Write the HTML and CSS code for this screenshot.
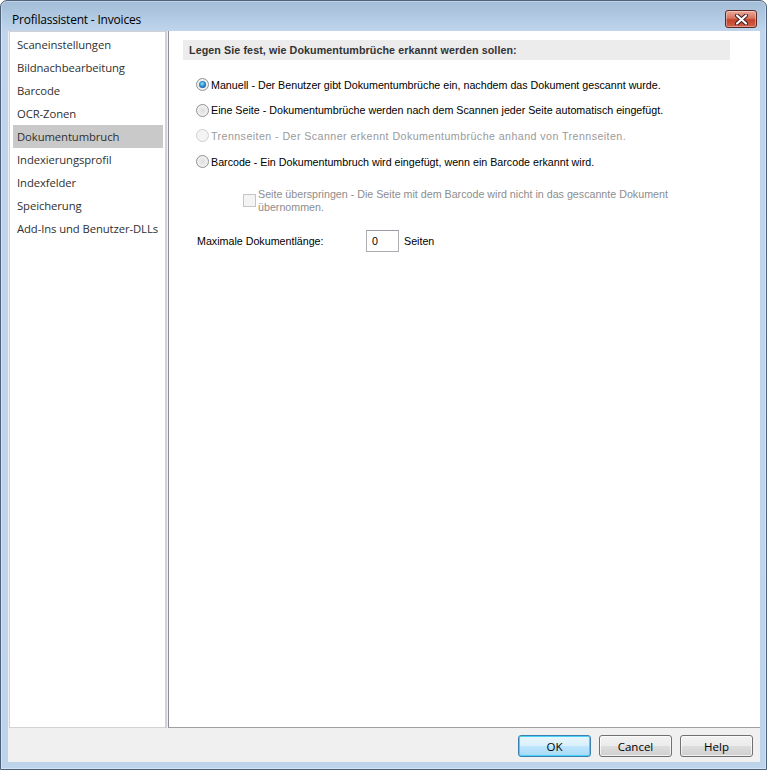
FILE: index.html
```html
<!DOCTYPE html>
<html lang="de">
<head>
<meta charset="utf-8">
<title>Profilassistent - Invoices</title>
<link rel="stylesheet" href="styles.css">
</head>
<body>
<div class="window">
  <div class="titlebar">
    <span class="title">Profilassistent - Invoices</span>
    <span class="close">
      <svg width="15" height="11" viewBox="0 0 15 11">
        <path d="M3 1.5 L12 9.5 M12 1.5 L3 9.5" stroke="#3a1a1a" stroke-width="4" stroke-linecap="round"/>
        <path d="M3 1.5 L12 9.5 M12 1.5 L3 9.5" stroke="#ffffff" stroke-width="2.2" stroke-linecap="round"/>
      </svg>
    </span>
  </div>
  <div class="client">
    <div class="main">
      <div class="nav">
        <div class="nav-item">Scaneinstellungen</div>
        <div class="nav-item">Bildnachbearbeitung</div>
        <div class="nav-item">Barcode</div>
        <div class="nav-item">OCR-Zonen</div>
        <div class="nav-item selected">Dokumentumbruch</div>
        <div class="nav-item">Indexierungsprofil</div>
        <div class="nav-item">Indexfelder</div>
        <div class="nav-item">Speicherung</div>
        <div class="nav-item">Add-Ins und Benutzer-DLLs</div>
      </div>
      <div class="content">
        <div class="header">Legen Sie fest, wie Dokumentumbrüche erkannt werden sollen:</div>
        <div class="options">
          <div class="opt"><span class="radio checked"></span><span>Manuell - Der Benutzer gibt Dokumentumbrüche ein, nachdem das Dokument gescannt wurde.</span></div>
          <div class="opt"><span class="radio"></span><span>Eine Seite - Dokumentumbrüche werden nach dem Scannen jeder Seite automatisch eingefügt.</span></div>
          <div class="opt disabled"><span class="radio"></span><span>Trennseiten - Der Scanner erkennt Dokumentumbrüche anhand von Trennseiten.</span></div>
          <div class="opt"><span class="radio"></span><span>Barcode - Ein Dokumentumbruch wird eingefügt, wenn ein Barcode erkannt wird.</span></div>
        </div>
        <div class="check-row">
          <span class="checkbox"></span>
          <span class="check-text">Seite überspringen - Die Seite mit dem Barcode wird nicht in das gescannte Dokument übernommen.</span>
        </div>
        <div class="len-row">
          <span class="len-label">Maximale Dokumentlänge:</span>
          <span class="input">0</span>
          <span class="unit">Seiten</span>
        </div>
      </div>
    </div>
    <div class="footer">
      <button class="btn default">OK</button>
      <button class="btn">Cancel</button>
      <button class="btn">Help</button>
    </div>
  </div>
</div>
</body>
</html>
```
FILE: styles.css
```css
html, body {
  margin: 0;
  padding: 0;
  background: #ffffff;
}
.window {
  box-sizing: border-box;
  width: 767px;
  height: 770px;
  border: 1px solid #4d6178;
  border-radius: 7px 7px 0 0;
  background: linear-gradient(to bottom, #a3bcd7 0px, #b3cbe4 18px, #c0d5ec 30px, #bed4eb 100%);
  padding: 0 6px 7px 7px;
  display: flex;
  flex-direction: column;
  box-shadow: inset 0 0 0 1px rgba(255,255,255,0.35);
}
.titlebar {
  height: 30px;
  display: flex;
  align-items: center;
  justify-content: space-between;
  flex: none;
}
.title {
  font-family: "Open Sans", "Noto Sans", sans-serif;
  font-size: 12px;
  color: #000;
  margin-left: 4px;
  margin-top: 6px;
  letter-spacing: -0.2px;
}
.close {
  width: 30px;
  height: 16px;
  border: 1px solid #5b2a25;
  border-radius: 3px;
  background: linear-gradient(to bottom, #e9a99b 0%, #d7735f 45%, #c4432c 55%, #d0614a 100%);
  display: flex;
  align-items: center;
  justify-content: center;
  margin-right: 3px;
  margin-top: 6px;
  box-shadow: inset 0 0 0 1px rgba(255,255,255,0.35);
}
.close svg { display: block; }
.client {
  flex: 1;
  background: #f0f0f0;
  display: flex;
  flex-direction: column;
  min-height: 0;
}
.main {
  flex: 1;
  display: flex;
  min-height: 0;
}
.nav {
  box-sizing: border-box;
  width: 158px;
  margin-left: 1px;
  background: #ffffff;
  border: 1px solid #d2d2d2;
  border-right-width: 2px;
  padding: 1px 2px 0 3px;
  flex: none;
}
.nav-item {
  height: 23px;
  line-height: 23px;
  padding-left: 4px;
  font-family: "Open Sans", "Noto Sans", sans-serif;
  font-size: 11.3px;
  color: #303030;
  letter-spacing: -0.1px;
  white-space: nowrap;
}
.nav-item.selected {
  background: #c9c9c9;
}
.content {
  flex: 1;
  margin-left: 1px;
  background: #ffffff;
  border-left: 1px solid #8d8d99;
  border-bottom: 1px solid #a0a0a0;
  font-family: "Liberation Sans", Arial, sans-serif;
  font-size: 10.7px;
  color: #000;
  padding: 9px 0 0 14px;
}
.header {
  width: 547px;
  height: 20px;
  line-height: 20px;
  background: #ececec;
  font-weight: bold;
  color: #333333;
  padding-left: 6px;
  box-sizing: border-box;
  letter-spacing: 0.1px;
}
.options {
  margin-top: 12px;
  padding-left: 13px;
}
.opt {
  display: flex;
  align-items: center;
  height: 25.6px;
  gap: 2px;
}
.opt.disabled {
  color: #9a9a9a;
  letter-spacing: 0.42px;
}
.radio {
  box-sizing: border-box;
  width: 13px;
  height: 13px;
  border-radius: 50%;
  border: 1px solid #8f9092;
  background: radial-gradient(circle at 50% 50%, #dcdcdc 0, #eeeeee 55%, #fafafa 100%);
  display: flex;
  align-items: center;
  justify-content: center;
  flex: none;
}
.radio.checked::after {
  content: "";
  width: 7px;
  height: 7px;
  border-radius: 50%;
  background: radial-gradient(circle at 45% 40%, #9be0ff 0, #2a8cd0 45%, #0b3f78 100%);
}
.opt.disabled .radio {
  border-color: #cfcfcf;
  background: #f4f4f4;
}
.check-row {
  display: flex;
  align-items: flex-start;
  margin-top: 14px;
  padding-left: 60px;
  color: #8d8d8d;
}
.checkbox {
  box-sizing: border-box;
  width: 13px;
  height: 13px;
  border: 1px solid #c4c4c4;
  background: #f4f4f4;
  margin-top: 6px;
  margin-right: 2px;
  flex: none;
}
.check-text {
  width: 440px;
  line-height: 13px;
}
.len-row {
  display: flex;
  align-items: center;
  margin-top: 16px;
  padding-left: 14px;
}
.len-label { width: 169px; }
.input {
  box-sizing: border-box;
  width: 33px;
  height: 22px;
  border: 1px solid #abadb3;
  border-top-color: #9a9ca3;
  line-height: 20px;
  padding-left: 5px;
  background: #fff;
}
.unit { margin-left: 5px; }
.footer {
  height: 34px;
  flex: none;
  display: flex;
  justify-content: flex-end;
  align-items: flex-start;
  padding: 7px 7px 0 0;
  box-sizing: border-box;
  gap: 8px;
}
.btn {
  box-sizing: border-box;
  width: 73px;
  height: 22px;
  border: 1px solid #707070;
  border-radius: 3px;
  background: linear-gradient(to bottom, #f2f2f2 0%, #ebebeb 48%, #dddddd 52%, #cfcfcf 100%);
  font-family: "Open Sans", "Noto Sans", sans-serif;
  font-size: 11.5px;
  color: #000;
  padding: 0;
  box-shadow: inset 0 0 0 1px rgba(255,255,255,0.7);
}
.btn.default {
  border-color: #3c7fb1;
  background: linear-gradient(to bottom, #eaf6fd 0%, #d9f0fc 48%, #bee6fd 52%, #a7d9f5 100%);
  box-shadow: inset 0 0 0 1px #48d2f8;
}
```
